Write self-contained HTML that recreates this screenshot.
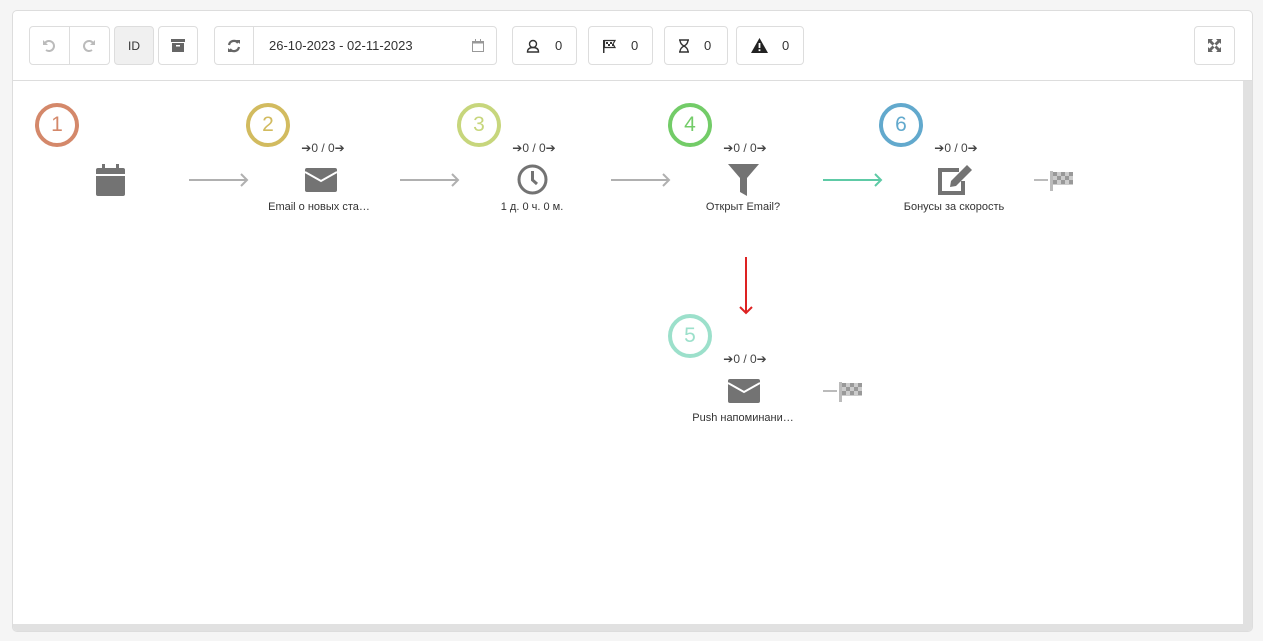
<!DOCTYPE html>
<html><head><meta charset="utf-8"><style>
*{box-sizing:border-box}
body{margin:0;width:1263px;height:641px;background:#f5f5f5;font-family:"Liberation Sans","Noto Sans CJK SC",sans-serif;position:relative;overflow:hidden;color:#333}
.card{position:absolute;left:12px;top:10px;width:1241px;height:622px;background:#fff;border:1px solid #ddd;border-radius:5px;overflow:hidden}
.tb{position:absolute;left:0;top:0;width:100%;height:70px;border-bottom:1px solid #ddd}
.b{position:absolute;top:15px;height:39px;border:1px solid #ddd;border-radius:4px;background:#fff;display:flex;align-items:center;font-size:13px}
.abs{position:absolute}
.circ{position:absolute;width:44px;height:44px;border-radius:50%;border:4px solid;display:flex;align-items:center;justify-content:center;font-size:21px}
.cnt{position:absolute;font-size:12px;color:#444;width:80px;text-align:center}
.lbl{position:absolute;font-size:11px;color:#333;width:160px;text-align:center}
</style></head><body>
<div class="card">
<div class="tb">
 <div class="b" style="left:16px;width:81px"><div style="width:40px;height:100%;border-right:1px solid #ddd;display:flex;align-items:center;justify-content:center">
 <svg width="14" height="14" viewBox="0 0 14 14"><path d="M3 4 A5 5 0 1 1 4 11" fill="none" stroke="#bbb" stroke-width="2"/><path d="M1 1 L1 6 L6 6Z" fill="#bbb"/></svg></div>
 <div style="width:40px;display:flex;justify-content:center"><svg width="14" height="14" viewBox="0 0 14 14"><path d="M11 4 A5 5 0 1 0 10 11" fill="none" stroke="#bbb" stroke-width="2"/><path d="M13 1 L13 6 L8 6Z" fill="#bbb"/></svg></div></div>
 <div class="b" style="left:101px;width:40px;background:#f0f0f0;justify-content:center;font-size:12px">ID</div>
 <div class="b" style="left:145px;width:40px;justify-content:center"><svg width="14" height="13" viewBox="0 0 14 13"><rect x="0" y="0" width="14" height="3" fill="#666"/><rect x="1" y="4" width="12" height="9" fill="#666"/><rect x="5" y="6" width="4" height="1.5" fill="#fff"/></svg></div>
 <div class="b" style="left:201px;width:283px"><div style="width:39px;height:100%;border-right:1px solid #ddd;display:flex;align-items:center;justify-content:center"><svg width="14" height="14" viewBox="0 0 14 14"><path d="M2 6 A5 5 0 0 1 11 4 M12 8 A5 5 0 0 1 3 10" fill="none" stroke="#666" stroke-width="2.2"/><path d="M9 1 L13 1 L13 5Z M5 13 L1 13 L1 9Z" fill="#666"/></svg></div>
 <span style="margin-left:15px">26-10-2023 - 02-11-2023</span>
 <svg class="abs" style="left:257px;top:12px" width="12" height="13" viewBox="0 0 12 13"><rect x="0.5" y="2.5" width="11" height="10" fill="none" stroke="#999"/><rect x="0.5" y="2.5" width="11" height="2" fill="#999"/><rect x="3" y="0" width="1" height="3" fill="#999"/><rect x="8" y="0" width="1" height="3" fill="#999"/></svg></div>
 <div class="b" style="left:499px;width:65px"><svg style="margin-left:13px" width="14" height="14" viewBox="0 0 14 14"><circle cx="7" cy="5" r="3.5" fill="none" stroke="#333" stroke-width="1.4"/><path d="M1.5 13 Q1.5 8.5 7 8.5 Q12.5 8.5 12.5 13Z" fill="none" stroke="#333" stroke-width="1.4"/></svg><span style="margin-left:15px">0</span></div>
 <div class="b" style="left:575px;width:65px"><svg style="margin-left:13px" width="15" height="14" viewBox="0 0 15 14"><rect x="1" y="1" width="1.5" height="13" fill="#333"/><path d="M2.5 1.5 L13 1.5 L11 5 L13 8.5 L2.5 8.5Z" fill="none" stroke="#333" stroke-width="1.2"/><path d="M4 3h2v2H4zM8 3h2v2H8zM6 5h2v2H6zM10 5h2v2h-2z" fill="#333"/></svg><span style="margin-left:14px">0</span></div>
 <div class="b" style="left:651px;width:64px"><svg style="margin-left:13px" width="12" height="14" viewBox="0 0 12 14"><path d="M1 1H11M1 13H11M2 1 Q2 5 6 7 Q10 9 10 13 M10 1 Q10 5 6 7 Q2 9 2 13" fill="none" stroke="#333" stroke-width="1.4"/></svg><span style="margin-left:14px">0</span></div>
 <div class="b" style="left:723px;width:68px"><svg style="margin-left:14px" width="17" height="15" viewBox="0 0 17 15"><path d="M8.5 0 L17 15 L0 15Z" fill="#222"/><rect x="7.6" y="5" width="1.8" height="5" fill="#fff"/><rect x="7.6" y="11.3" width="1.8" height="1.8" fill="#fff"/></svg><span style="margin-left:14px">0</span></div>
 <div class="b" style="left:1181px;width:41px;justify-content:center"><svg width="13" height="13" viewBox="0 0 13 13" fill="#666"><path d="M0 0H5L3.5 1.5 6.5 4.5 4.5 6.5 1.5 3.5 0 5Z"/><path d="M13 0V5L11.5 3.5 8.5 6.5 6.5 4.5 9.5 1.5 8 0Z"/><path d="M0 13V8L1.5 9.5 4.5 6.5 6.5 8.5 3.5 11.5 5 13Z"/><path d="M13 13H8L9.5 11.5 6.5 8.5 8.5 6.5 11.5 9.5 13 8Z"/></svg></div>
</div>
<div class="abs" style="left:1230px;top:70px;width:9px;height:552px;background:#e1e1e1"></div>
<div class="abs" style="left:0;top:613px;width:1230px;height:8px;background:#e1e1e1"></div>
</div>

<!-- circles -->
<div class="circ" style="left:35px;top:103px;border-color:#d4886a;color:#d4886a">1</div>
<div class="circ" style="left:246px;top:103px;border-color:#d2bb5f;color:#d2bb5f">2</div>
<div class="circ" style="left:457px;top:103px;border-color:#c7d67c;color:#c7d67c">3</div>
<div class="circ" style="left:668px;top:103px;border-color:#73cc68;color:#73cc68">4</div>
<div class="circ" style="left:879px;top:103px;border-color:#62a9cd;color:#62a9cd">6</div>
<div class="circ" style="left:668px;top:314px;border-color:#9ce0cb;color:#9ce0cb">5</div>

<div class="cnt" style="left:283px;top:141px">➔0 / 0➔</div>
<div class="cnt" style="left:494px;top:141px">➔0 / 0➔</div>
<div class="cnt" style="left:705px;top:141px">➔0 / 0➔</div>
<div class="cnt" style="left:916px;top:141px">➔0 / 0➔</div>
<div class="cnt" style="left:705px;top:352px">➔0 / 0➔</div>

<!-- icons -->
<svg class="abs" style="left:96px;top:164px" width="29" height="32" viewBox="0 0 29 32"><rect x="0" y="4" width="29" height="28" rx="2" fill="#737373"/><rect x="0" y="10" width="29" height="2" fill="#fff"/><rect x="6" y="0" width="3" height="7" fill="#737373"/><rect x="20" y="0" width="3" height="7" fill="#737373"/></svg>
<svg class="abs" style="left:305px;top:168px" width="32" height="24" viewBox="0 0 32 24"><rect width="32" height="24" rx="2" fill="#737373"/><path d="M0 4 L16 13 L32 4" fill="none" stroke="#fff" stroke-width="2"/></svg>
<svg class="abs" style="left:517px;top:164px" width="31" height="31" viewBox="0 0 31 31"><circle cx="15.5" cy="15.5" r="13.5" fill="none" stroke="#737373" stroke-width="3"/><path d="M15.5 7V16L20 20" fill="none" stroke="#737373" stroke-width="3"/></svg>
<svg class="abs" style="left:728px;top:164px" width="31" height="32" viewBox="0 0 31 32"><path d="M0 0H31L19 14V32L12 28V14Z" fill="#737373"/></svg>
<svg class="abs" style="left:937px;top:164px" width="36" height="32" viewBox="0 0 36 32"><path d="M22 6H3V29H26V17" fill="none" stroke="#737373" stroke-width="4"/><path d="M30 1 L35 6 L19 22 L13 23 L14 17Z" fill="#737373"/></svg>
<svg class="abs" style="left:728px;top:379px" width="32" height="24" viewBox="0 0 32 24"><rect width="32" height="24" rx="2" fill="#737373"/><path d="M0 4 L16 13 L32 4" fill="none" stroke="#fff" stroke-width="2"/></svg>

<!-- flags -->
<svg class="abs" style="left:1034px;top:169px" width="40" height="24" viewBox="0 0 40 24"><rect x="0" y="10" width="14" height="2" fill="#bbb"/><rect x="16" y="2" width="3" height="20" fill="#bbb"/><path d="M19 3H39V16H19Z" fill="#ccc"/><path d="M19 3h4v4h-4zM27 3h4v4h-4zM35 3h4v4h-4zM23 7h4v4h-4zM31 7h4v4h-4zM19 11h4v4h-4zM27 11h4v4h-4zM35 11h4v4h-4z" fill="#999"/></svg>
<svg class="abs" style="left:823px;top:380px" width="40" height="24" viewBox="0 0 40 24"><rect x="0" y="10" width="14" height="2" fill="#bbb"/><rect x="16" y="2" width="3" height="20" fill="#bbb"/><path d="M19 3H39V16H19Z" fill="#ccc"/><path d="M19 3h4v4h-4zM27 3h4v4h-4zM35 3h4v4h-4zM23 7h4v4h-4zM31 7h4v4h-4zM19 11h4v4h-4zM27 11h4v4h-4zM35 11h4v4h-4z" fill="#999"/></svg>

<!-- arrows -->
<svg class="abs" style="left:0;top:0" width="1263" height="641">
<g fill="none" stroke-width="2">
<path d="M189 180H247M241 174L247 180 241 186" stroke="#b0b0b0"/>
<path d="M400 180H458M452 174L458 180 452 186" stroke="#b0b0b0"/>
<path d="M611 180H669M663 174L669 180 663 186" stroke="#b0b0b0"/>
<path d="M823 180H881M875 174L881 180 875 186" stroke="#5ecaa6"/>
<path d="M746 257V313M740 307L746 313 752 307" stroke="#dd2222"/>
</g></svg>

<div class="lbl" style="left:239px;top:201px">Email о новых ста…</div>
<div class="lbl" style="left:452px;top:201px">1 д. 0 ч. 0 м.</div>
<div class="lbl" style="left:663px;top:201px">Открыт Email?</div>
<div class="lbl" style="left:874px;top:201px">Бонусы за скорость</div>
<div class="lbl" style="left:663px;top:412px">Push напоминани…</div>
</body></html>
